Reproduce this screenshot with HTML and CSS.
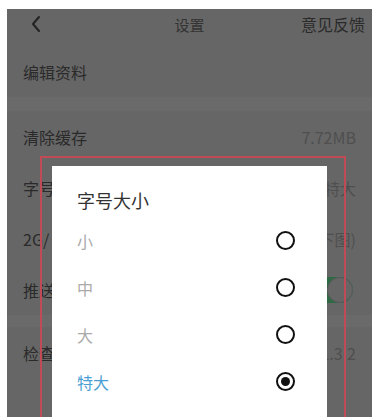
FILE: index.html
```html
<!DOCTYPE html>
<html lang="zh-CN">

<head>
    <meta charset="UTF-8">
    <meta name="viewport" content="width=device-width, initial-scale=1.0">
    <title>设置</title>
    <link rel="stylesheet" href="styles.css">
</head>

<body>
    <div class="phone">
        <!-- Top bar -->
        <div class="nav">
            <svg class="back" width="12" height="18" viewBox="0 0 12 18">
                <polyline points="9,2 3,9 9,16" fill="none" stroke="#222" stroke-width="2" stroke-linecap="round" stroke-linejoin="round" />
            </svg>
            <span class="nav-title">设置</span>
            <span class="nav-action">意见反馈</span>
        </div>

        <!-- Settings list (dimmed behind dialog) -->
        <div class="row first">
            <span>编辑资料</span>
        </div>
        <div class="gap"></div>
        <div class="row">
            <span>清除缓存</span>
            <span class="value">7.72MB</span>
        </div>
        <div class="row">
            <span>字号</span>
            <span class="value">特大</span>
        </div>
        <div class="row">
            <span>2G/</span>
            <span class="value">下图)</span>
        </div>
        <div class="row">
            <span>推送</span>
            <span class="switch"><span class="knob"></span></span>
        </div>
        <div class="gap small"></div>
        <div class="row">
            <span>检查</span>
            <span class="value">1.3.2</span>
        </div>

        <!-- Font size dialog -->
        <div class="dialog">
            <div class="dialog-title">字号大小</div>
            <div class="option">
                <span>小</span>
                <span class="radio"></span>
            </div>
            <div class="option">
                <span>中</span>
                <span class="radio"></span>
            </div>
            <div class="option">
                <span>大</span>
                <span class="radio"></span>
            </div>
            <div class="option active">
                <span>特大</span>
                <span class="radio checked"></span>
            </div>
        </div>

        <!-- Red annotation frame -->
        <div class="highlight"></div>
    </div>
</body>

</html>
```

FILE: styles.css
```css
body {
    margin: 0;
    background-color: #fff;
    font-family: "Noto Sans CJK SC", "Noto Sans", sans-serif;
}

.phone {
    position: relative;
    margin: 9px 0 0 7px;
    width: 365px;
    height: 408px;
    background-color: #666;
    color: #2a2a2a;
    overflow: hidden;
}

.nav {
    height: 30px;
    display: grid;
    grid-template-columns: 1fr auto 1fr;
    align-items: center;
    padding: 0 7px;
}

.back {
    display: block;
    margin-left: 16px;
}

.nav-title {
    font-size: 15px;
    color: #333;
}

.nav-action {
    font-size: 16px;
    justify-self: end;
}

.row {
    height: 51px;
    display: flex;
    align-items: center;
    justify-content: space-between;
    padding: 0 16px;
    font-size: 16px;
}

.row.first {
    margin-top: 7px;
}

.row .value {
    color: #4f4f4f;
}

.gap {
    height: 14px;
    background-color: #6a6a6a;
}

.gap.small {
    height: 12px;
}

.switch {
    position: relative;
    display: block;
    width: 50px;
    height: 26px;
    border-radius: 13px;
    background-color: #2f6a45;
    margin-right: 3px;
}

.knob {
    position: absolute;
    right: 0;
    top: 0;
    width: 24px;
    height: 24px;
    border-radius: 50%;
    background-color: #666;
    border: 1px solid #5a5a5a;
}

.dialog {
    position: absolute;
    left: 45px;
    top: 157px;
    width: 275px;
    height: 300px;
    background-color: #fff;
    box-sizing: border-box;
    padding: 0 32px 0 25px;
}

.dialog-title {
    padding: 22px 0 5px;
    line-height: 24px;
    font-size: 18px;
    color: #333;
}

.option {
    height: 47px;
    display: flex;
    align-items: center;
    justify-content: space-between;
    font-size: 16px;
    color: #aaa;
}

.option.active {
    color: #4a9fd3;
}

.radio {
    display: block;
    width: 15px;
    height: 15px;
    border: 2.5px solid #111;
    border-radius: 50%;
    position: relative;
}

.radio.checked::after {
    content: "";
    position: absolute;
    left: 3px;
    top: 3px;
    width: 9px;
    height: 9px;
    border-radius: 50%;
    background-color: #111;
}

.highlight {
    position: absolute;
    left: 33px;
    top: 147px;
    width: 302px;
    height: 400px;
    border: 2px solid #c04a56;
}
```
